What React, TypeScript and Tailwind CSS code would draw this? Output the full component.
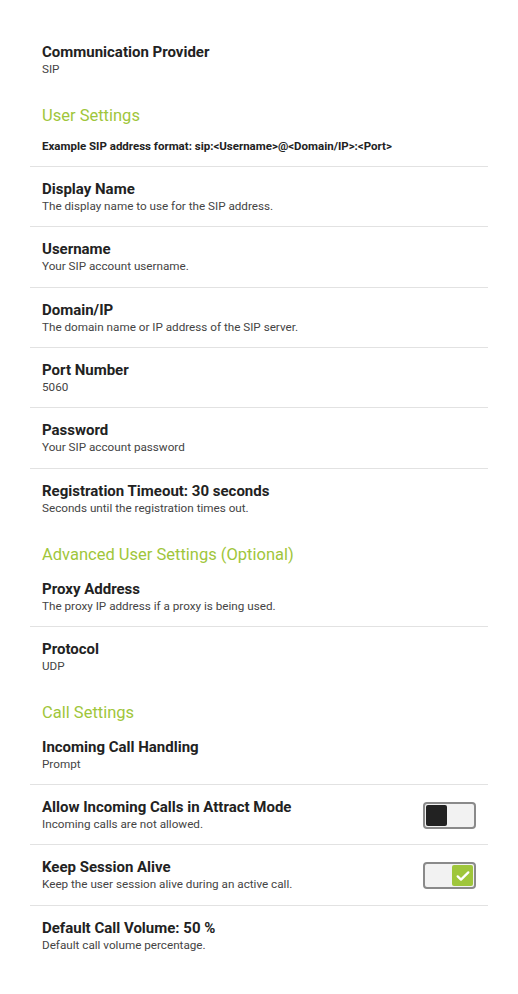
type Row = {
  title: string;
  subtitle: string;
  toggle?: "off" | "on";
};

const Toggle = ({ on }: { on: boolean }) => (
  <div className="flex h-[27px] w-[53px] shrink-0 items-center rounded-[4px] border-2 border-[#8a8a8a] bg-[#f2f2f2] px-[1px]">
    {on ? (
      <div className="ml-auto flex h-[21px] w-[21px] items-center justify-center rounded-[2px] bg-[#9fc63b]">
        <svg width="16" height="16" viewBox="0 0 24 24" fill="none">
          <path d="M4 12.5l5 5L20 6.5" stroke="white" strokeWidth="3.4" strokeLinecap="round" strokeLinejoin="round" />
        </svg>
      </div>
    ) : (
      <div className="h-[21px] w-[21px] rounded-[2px] bg-[#222222]" />
    )}
  </div>
);

const SettingRow = ({ row, last }: { row: Row; last: boolean }) => (
  <div className={last ? "" : "border-b border-[#e2e2e2]"}>
    <div className="flex items-center px-3 pt-[13px] pb-[11.4px]">
      <div className="flex flex-1 flex-col">
        <span className="text-[15px] leading-[18px] font-bold text-[#222222]">{row.title}</span>
        <span className="text-[11.7px] leading-[17px] text-[#444444]">{row.subtitle}</span>
      </div>
      {row.toggle && <Toggle on={row.toggle === "on"} />}
    </div>
  </div>
);

const Section = ({ header, note, rows }: { header: string; note?: string; rows: Array<Row> }) => (
  <div className="flex flex-col">
    <div className="mt-[14.4px] px-3 text-[16.5px] leading-[24px] text-[#9fc63b]">{header}</div>
    {note && (
      <div className="border-b border-[#e2e2e2] px-3 pt-[11px] pb-[13px] text-[11.5px] leading-[14px] font-bold text-[#222222]">
        {note}
      </div>
    )}
    {rows.map((row, i) => (
      <SettingRow key={row.title} row={row} last={i === rows.length - 1} />
    ))}
  </div>
);

export default function App() {
  return (
    <div
      className="min-h-[994px] w-full bg-white"
      style={{ fontFamily: "Roboto, 'Liberation Sans', sans-serif" }}
    >
      <div className="mx-[30px] flex flex-col pt-[30px]">
        <SettingRow row={{ title: "Communication Provider", subtitle: "SIP" }} last={true} />
        <Section
          header="User Settings"
          note="Example SIP address format: sip:<Username>@<Domain/IP>:<Port>"
          rows={[
            { title: "Display Name", subtitle: "The display name to use for the SIP address." },
            { title: "Username", subtitle: "Your SIP account username." },
            { title: "Domain/IP", subtitle: "The domain name or IP address of the SIP server." },
            { title: "Port Number", subtitle: "5060" },
            { title: "Password", subtitle: "Your SIP account password" },
            { title: "Registration Timeout: 30 seconds", subtitle: "Seconds until the registration times out." },
          ]}
        />
        <Section
          header="Advanced User Settings (Optional)"
          rows={[
            { title: "Proxy Address", subtitle: "The proxy IP address if a proxy is being used." },
            { title: "Protocol", subtitle: "UDP" },
          ]}
        />
        <Section
          header="Call Settings"
          rows={[
            { title: "Incoming Call Handling", subtitle: "Prompt" },
            { title: "Allow Incoming Calls in Attract Mode", subtitle: "Incoming calls are not allowed.", toggle: "off" },
            { title: "Keep Session Alive", subtitle: "Keep the user session alive during an active call.", toggle: "on" },
            { title: "Default Call Volume: 50 %", subtitle: "Default call volume percentage." },
          ]}
        />
      </div>
    </div>
  );
}
